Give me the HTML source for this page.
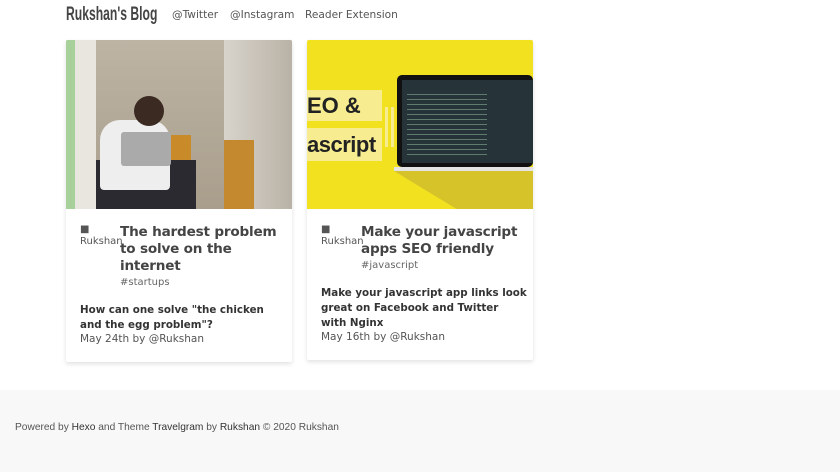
<!DOCTYPE html>
<html><head><style>
*{margin:0;padding:0;box-sizing:border-box}
body{width:840px;height:472px;background:#fff;font-family:"DejaVu Sans","Liberation Sans",sans-serif;color:#333;position:relative;overflow:hidden}
.brand{position:absolute;left:66px;top:4px;font-family:"Liberation Sans",sans-serif;font-weight:bold;font-size:19px;color:#444;transform:scaleX(.64);transform-origin:left;white-space:nowrap}
.nav{position:absolute;top:9px;font-size:10.6px;color:#555}
.card{position:absolute;top:40px;width:226px;background:#fff;box-shadow:0 2px 5px rgba(0,0,0,.12);border-radius:2px;overflow:hidden}
.img{height:169px;position:relative;overflow:hidden}
.ava{position:absolute;left:14px;top:184px;font-size:10px;color:#555;line-height:12px}
.title{position:absolute;left:54px;top:184px;width:172px;font-weight:bold;font-size:13.6px;line-height:17px;color:#444;letter-spacing:-.2px}
.tag{font-weight:normal;font-size:10px;color:#666;line-height:16px;letter-spacing:0}
.ex{position:absolute;left:14px;width:210px;font-weight:bold;font-size:10.3px;line-height:15px;color:#333;white-space:nowrap}
.meta{position:absolute;left:14px;font-size:10.5px;color:#555}
.foot{position:absolute;left:0;top:390px;width:840px;height:82px;background:#f8f8f8;font-family:"Liberation Sans",sans-serif;font-size:10.2px;color:#555;padding:32px 0 0 15px}
.foot b{font-weight:normal;color:#333}
</style></head><body>
<div class="brand">Rukshan's Blog</div>
<div class="nav" style="left:172px">@Twitter</div>
<div class="nav" style="left:230px">@Instagram</div>
<div class="nav" style="left:305px">Reader Extension</div>

<div class="card" style="left:66px;height:322px">
 <div class="img" style="background:#bfb6a6">
  <div style="position:absolute;left:0;top:0;width:9px;height:169px;background:#a8d09a"></div>
  <div style="position:absolute;left:9px;top:0;width:21px;height:169px;background:#e9e6df"></div>
  <div style="position:absolute;left:30px;top:0;width:128px;height:169px;background:linear-gradient(#bdb4a4,#a99e8c)"></div>
  <div style="position:absolute;left:158px;top:0;width:68px;height:169px;background:linear-gradient(90deg,#d8d4cc,#b9b2a6)"></div>
  <div style="position:absolute;left:158px;top:100px;width:30px;height:69px;background:#c4892e"></div>
  <div style="position:absolute;left:80px;top:95px;width:45px;height:74px;background:#c98a2a"></div>
  <div style="position:absolute;left:30px;top:120px;width:100px;height:49px;background:#2a2a30"></div>
  <div style="position:absolute;left:34px;top:80px;width:70px;height:70px;background:#eee;border-radius:20px 20px 4px 4px"></div>
  <div style="position:absolute;left:68px;top:56px;width:30px;height:30px;background:#3a2a22;border-radius:50%"></div>
  <div style="position:absolute;left:55px;top:92px;width:50px;height:34px;background:#aaa;border-radius:3px"></div>
 </div>
 <div class="ava">&#9632;<br>Rukshan</div>
 <div class="title">The hardest problem to solve on the internet<div class="tag">#startups</div></div>
 <div class="ex" style="top:263px">How can one solve "the chicken<br>and the egg problem"?</div>
 <div class="meta" style="top:293px">May 24th by @Rukshan</div>
</div>

<div class="card" style="left:307px;height:320px">
 <div class="img" style="background:#f2e11e">
  <div style="position:absolute;left:0;top:50px;width:75px;height:31px;background:#f7ed90;font-weight:bold;font-size:22px;color:#222;line-height:31px;font-family:'Liberation Sans',sans-serif">EO &amp;</div>
  <div style="position:absolute;left:0;top:88px;width:75px;height:33px;background:#f7ed90;font-weight:bold;font-size:22px;color:#222;line-height:33px;font-family:'Liberation Sans',sans-serif;letter-spacing:-.5px">ascript</div>
  <div style="position:absolute;left:78px;top:67px;width:3px;height:40px;background:#f7ed90"></div>
  <div style="position:absolute;left:84px;top:67px;width:3px;height:40px;background:#f7ed90"></div>
  <div style="position:absolute;left:90px;top:35px;width:136px;height:92px;background:#111;border-radius:5px"></div>
  <div style="position:absolute;left:95px;top:40px;width:131px;height:83px;background:#26343a"></div>
  <div style="position:absolute;left:100px;top:50px;width:80px;height:65px;background:repeating-linear-gradient(#26343a 0 4px,#6c8d7a 4px 5px);opacity:.8"></div>
  <div style="position:absolute;left:87px;top:127px;width:139px;height:4px;background:#e4e4e4"></div>
  <div style="position:absolute;left:87px;top:131px;width:139px;height:38px;background:#d6c32a;clip-path:polygon(0 0,100% 0,100% 100%,45% 100%)"></div>
 </div>
 <div class="ava">&#9632;<br>Rukshan</div>
 <div class="title">Make your javascript apps SEO friendly<div class="tag">#javascript</div></div>
 <div class="ex" style="top:246px">Make your javascript app links look<br>great on Facebook and Twitter<br>with Nginx</div>
 <div class="meta" style="top:291px">May 16th by @Rukshan</div>
</div>

<div class="foot">Powered by <b>Hexo</b> and Theme <b>Travelgram</b> by <b>Rukshan</b> © 2020 Rukshan</div>
</body></html>
